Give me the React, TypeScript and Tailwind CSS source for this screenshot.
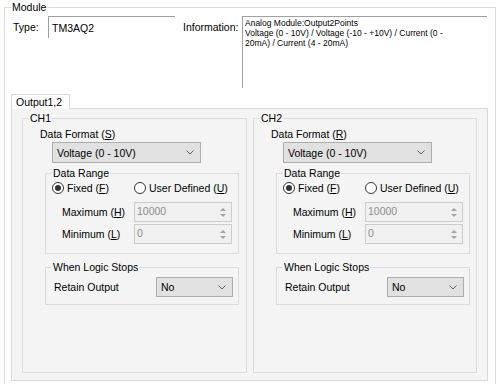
function Chevron() {
  return (
    <svg width="8" height="5" viewBox="0 0 8 5" className="shrink-0">
      <polyline points="0.5,0.5 4,4 7.5,0.5" fill="none" stroke="#606060" strokeWidth="1" />
    </svg>
  );
}

function ComboBox({ value, width }: { value: string; width: string }) {
  return (
    <div className={`flex items-center justify-between border border-[#adadad] bg-[#e1e1e1] pl-[4px] pr-[6px] ${width}`}>
      <span className="leading-[14px]">{value}</span>
      <Chevron />
    </div>
  );
}

function SpinBox({ value }: { value: string }) {
  return (
    <div className="flex h-[20px] w-[98px] border border-[#cccccc] bg-[#f0f0f0]">
      <span className="flex-1 pl-[2px] leading-[17px] text-[#8d8d8d]">{value}</span>
      <div className="flex w-[17px] flex-col items-center justify-center gap-[3px]">
        <svg width="6" height="3" viewBox="0 0 6 3">
          <polygon points="0,3 3,0 6,3" fill="#a3a3a3" />
        </svg>
        <svg width="6" height="3" viewBox="0 0 6 3">
          <polygon points="0,0 6,0 3,3" fill="#a3a3a3" />
        </svg>
      </div>
    </div>
  );
}

function Radio({ checked }: { checked?: boolean }) {
  return (
    <span className="flex h-[12px] w-[12px] shrink-0 items-center justify-center rounded-full border border-[#333333] bg-white">
      {checked && <span className="h-[6px] w-[6px] rounded-full bg-[#333333]" />}
    </span>
  );
}

function Channel({ name, hotkey, width }: { name: string; hotkey: string; width: string }) {
  return (
    <fieldset className={`border border-[#dcdcdc] pl-[6px] ${width}`}>
      <legend className="px-[1px] leading-[14px]">{name}</legend>

      <div className="ml-[11px] mt-[2px] leading-[14px]">
        Data Format (<u>{hotkey}</u>)
      </div>
      <div className="ml-[23px] mt-[1px]">
        <ComboBox value="Voltage (0 - 10V)" width="h-[21px] w-[149px]" />
      </div>

      <fieldset className="ml-[16px] mt-[3px] w-[194px] border border-[#dcdcdc] pb-[9px] pl-[6px]">
        <legend className="px-[1px] leading-[14px]">Data Range</legend>
        <div className="mt-[1px] flex h-[14px] items-center">
          <div className="flex w-[82px] items-center gap-[3px]">
            <Radio checked />
            <span className="leading-[14px]">
              Fixed (<u>F</u>)
            </span>
          </div>
          <div className="flex items-center gap-[3px]">
            <Radio />
            <span className="leading-[14px]">
              User Defined (<u>U</u>)
            </span>
          </div>
        </div>
        <div className="mt-[7px] flex items-center">
          <span className="ml-[10px] w-[72px] leading-[14px]">
            Maximum (<u>H</u>)
          </span>
          <SpinBox value="10000" />
        </div>
        <div className="mt-[2px] flex items-center">
          <span className="ml-[10px] w-[72px] leading-[14px]">
            Minimum (<u>L</u>)
          </span>
          <SpinBox value="0" />
        </div>
      </fieldset>

      <fieldset className="ml-[16px] mt-[6px] w-[194px] border border-[#dcdcdc] pb-[7px] pl-[6px]">
        <legend className="px-[1px] leading-[14px]">When Logic Stops</legend>
        <div className="mt-[3px] flex items-center">
          <span className="ml-[2px] w-[102px] leading-[14px]">Retain Output</span>
          <ComboBox value="No" width="h-[20px] w-[77px]" />
        </div>
      </fieldset>
    </fieldset>
  );
}

export default function App() {
  return (
    <div className="h-[384px] w-[500px] overflow-hidden bg-white text-[10.5px] text-black font-['Liberation_Sans',Arial,sans-serif]">
      <fieldset className="ml-[4px] h-[400px] w-[492px] border border-[#dcdcdc] pl-[6px]">
        <legend className="px-[1px] leading-[14px]">Module</legend>

        <div className="mt-[2px] flex">
          <span className="ml-[2px] w-[35px] pt-[4px] leading-[14px]">Type:</span>
          <div className="h-[22px] w-[127px] border-l border-t border-[#a0a0a0] bg-white pl-[3px] pt-[4px] leading-[14px]">
            TM3AQ2
          </div>
          <span className="ml-[8px] w-[59px] pt-[4px] leading-[14px]">Information:</span>
          <div className="h-[72px] w-[245px] border-l border-t border-[#a0a0a0] bg-white pl-[2px] pt-[1px] text-[8.5px] leading-[10px]">
            <div>Analog Module:Output2Points</div>
            <div>Voltage (0 - 10V) / Voltage (-10 - +10V) / Current (0 -</div>
            <div>20mA) / Current (4 - 20mA)</div>
          </div>
        </div>

        <div className="mt-[6px] flex">
          <div className="relative z-10 -mb-px h-[15px] w-[59px] border-l border-r border-t border-[#d9d9d9] bg-white pl-[4px] leading-[14px]">
            Output1,2
          </div>
        </div>
        <div className="flex h-[273px] w-[477px] gap-[6px] border border-[#d9d9d9] bg-[#f4f4f4] pb-[7px] pl-[10px] pt-[2px]">
          <Channel name="CH1" hotkey="S" width="w-[225px]" />
          <Channel name="CH2" hotkey="R" width="w-[224px]" />
        </div>
      </fieldset>
    </div>
  );
}
